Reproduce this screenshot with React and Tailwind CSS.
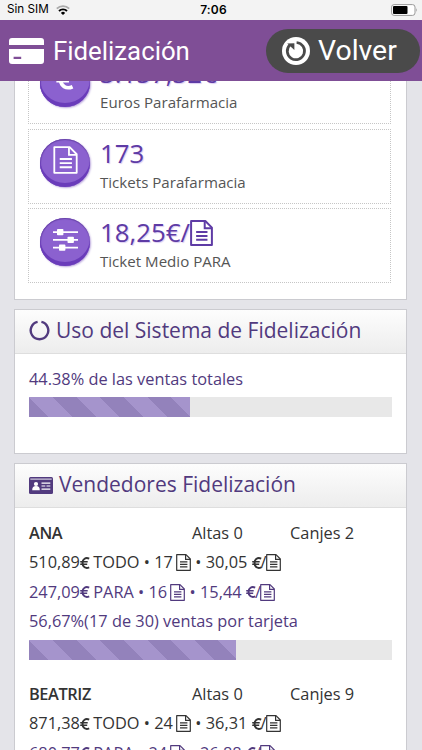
import React from "react";

const vendedores = [
    {
        nombre: "ANA",
        altas: 0,
        canjes: 2,
        todo: { euros: "510,89", tickets: 17, medio: "30,05" },
        para: { euros: "247,09", tickets: 16, medio: "15,44" },
        uso: "56,67%(17 de 30) ventas por tarjeta",
        porcentaje: 56.9
    },
    {
        nombre: "BEATRIZ",
        altas: 0,
        canjes: 9,
        todo: { euros: "871,38", tickets: 24, medio: "36,31" },
        para: { euros: "680,77", tickets: 24, medio: "26,88" },
        uso: "64,86%(24 de 37) ventas por tarjeta",
        porcentaje: 64.86
    }
];

// Icons
function TicketIcon({ className, stroke = 1.2 }) {
    return (
        <svg viewBox="0 0 15 17" className={className} fill="none" stroke="currentColor" strokeWidth={stroke}>
            <path d="M.7 .7H10L14.3 5V16.3H.7Z" strokeLinejoin="round" />
            <path d="M9.6 .9V5.4H14.2M4 7.9H11.4M4 10.4H11.4M4 12.9H11.4" />
        </svg>
    );
}

function EuroIcon({ className }) {
    return (
        <svg viewBox="0 0 10 12" className={className} fill="none" stroke="currentColor">
            <path d="M9.2 1.7C5.7 .1 2.5 2 2.5 6S5.7 11.9 9.2 10.3" strokeWidth="2" />
            <path d="M.2 4.8H7.7M.2 7.2H7.2" strokeWidth="1.4" />
        </svg>
    );
}

function SlidersIcon({ className }) {
    return (
        <svg viewBox="0 0 25 22" className={className} fill="currentColor">
            <path d="M0 2.2H25V4H0ZM0 10H25V11.8H0ZM0 17.8H25V19.6H0Z" />
            <rect x="4" y="0" width="6.4" height="6.2" rx=".8" />
            <rect x="14.5" y="7.8" width="6.4" height="6.2" rx=".8" />
            <rect x="6" y="15.6" width="6.4" height="6.2" rx=".8" />
        </svg>
    );
}

function CardIcon() {
    return (
        <svg viewBox="0 0 35 26" className="h-[26px] w-[35px] shrink-0" fill="#fff">
            <path d="M3 0H32A3 3 0 0 1 35 3V7H0V3A3 3 0 0 1 3 0Z" />
            <path fillRule="evenodd" d="M0 11H35V23A3 3 0 0 1 32 26H3A3 3 0 0 1 0 23ZM4.6 18.8V20.9H12.2V18.8Z" />
        </svg>
    );
}

function BackIcon() {
    return (
        <svg viewBox="0 0 28 28" className="size-7 shrink-0">
            <circle cx="14" cy="14" r="14" fill="#fff" />
            <path d="M14.6 5.5A8.6 8.6 0 1 1 8 7.8" fill="none" stroke="#4a4a4a" strokeWidth="2.7" />
            <path d="M5.2 6.6L12.4 6.2V13Z" fill="#4a4a4a" />
        </svg>
    );
}

function IdCardIcon() {
    return (
        <svg viewBox="0 0 24 17" className="mb-px h-[17px] w-6 shrink-0">
            <rect width="24" height="17" rx="1.5" fill="#513a7e" />
            <path d="M1.3 2.1H22.7" stroke="#fff" strokeWidth=".9" />
            <circle cx="7" cy="7" r="2.1" fill="#fff" />
            <path d="M3.2 13.3C3.2 10.3 4.4 9 7 9S10.8 10.3 10.8 13.3Z" fill="#fff" />
            <path d="M12.5 6.1H21.3M12.5 9H16.3M17.5 9H21.3M12.5 12.1H21.3" stroke="#fff" strokeWidth="1.2" />
        </svg>
    );
}

function Stat({ icon, label, children }) {
    return (
        <div className="flex h-[75px] items-start border border-dotted border-[#c6c6c6] pl-[11px]">
            <div className="mt-[9px] flex h-12 w-[50px] shrink-0 items-center justify-center rounded-[50%] bg-[#8b61cf] pb-[5px] text-white shadow-[inset_0_-4px_0_#6a3cba,inset_0_1px_1px_#6844a8,inset_1px_0_1px_#7148b5,1px_1px_2px_#b9a5dc]">
                {icon}
            </div>
            <div className="ml-2.5">
                <div className="mt-1.5 flex h-[35px] items-center text-[25.8px] whitespace-nowrap text-[#5e3ba5] [text-shadow:1px_1px_1px_#dccdf2]">
                    {children}
                </div>
                <div className="mt-px h-5 text-[15.1px] leading-5 whitespace-nowrap text-[#555]">{label}</div>
            </div>
        </div>
    );
}

function PanelTitle({ icon, children }) {
    return (
        <div className="flex h-11 items-center border-b border-[#dedede] bg-linear-to-b from-[#fdfdfd] to-[#ededed] pl-3.5 text-[21px] whitespace-nowrap text-[#513a7e]">
            {icon}
            <h2 className="mb-0.5 ml-1.5">{children}</h2>
        </div>
    );
}

function Progress({ value }) {
    return (
        <div className="h-5 bg-[#e8e8e8]">
            <div
                className="h-5 bg-[repeating-linear-gradient(45deg,#9382bb_0_14.1px,#a594cc_14.1px_30.8px,#9382bb_30.8px_33.4px)]"
                style={{ width: `${value}%` }}
            />
        </div>
    );
}

function Ventas({ tipo, datos, className }) {
    return (
        <div className={`flex h-[29.5px] items-center whitespace-pre ${className}`}>
            <span>{datos.euros}</span>
            <EuroIcon className="h-3 w-2.5" />
            <span className="-ml-px">{` ${tipo} • ${datos.tickets} `}</span>
            <TicketIcon className="-mx-px h-[17px] w-[15px]" />
            <span className="ml-px">{` • ${datos.medio} `}</span>
            <EuroIcon className="h-3 w-2.5" />
            <span className="-ml-px">/</span>
            <TicketIcon className="-ml-px h-[17px] w-[15px]" />
        </div>
    );
}

function Vendedor({ v }) {
    return (
        <div className="h-[161px]">
            <div className="flex h-[29.5px] items-center text-[#333]">
                <b className="w-[163px] font-semibold tracking-[-0.4px]">{v.nombre}</b>
                <span className="w-[98px]">Altas {v.altas}</span>
                <span>Canjes {v.canjes}</span>
            </div>
            <Ventas tipo="TODO" datos={v.todo} className="text-[#333]" />
            <Ventas tipo="PARA" datos={v.para} className="text-[#513a7e]" />
            <div className="mb-[3.5px] flex h-[29.5px] items-center whitespace-nowrap text-[#513a7e]">{v.uso}</div>
            <Progress value={v.porcentaje} />
        </div>
    );
}

function App() {
    return (
        <div className="flex h-[750px] w-[422px] flex-col overflow-hidden bg-[#e4e4e9] font-['Open_Sans',sans-serif]">

            {/* Status bar */}
            <div className="grid h-5 shrink-0 grid-cols-3 items-center bg-[#f3f3f3] pr-1 pl-[7px] font-['Inter',sans-serif] text-xs text-black">
                <div className="flex items-center gap-[7px]">
                    <span className="text-[11.7px]">Sin SIM</span>
                    <svg viewBox="0 0 14 10" className="h-2.5 w-3.5" fill="none" strokeWidth="1.9">
                        <path d="M.8 3.6A9 9 0 0 1 13.2 3.6" stroke="#aaa" />
                        <path d="M3 6A5.7 5.7 0 0 1 11 6" stroke="#000" />
                        <path d="M7 10L4.9 7.9A3 3 0 0 1 9.1 7.9Z" fill="#000" />
                    </svg>
                </div>
                <span className="pl-0.5 text-center font-semibold tracking-[0.2px]">7:06</span>
                <svg viewBox="0 0 27 12" className="h-3 w-[27px] justify-self-end">
                    <rect x=".6" y=".6" width="23.4" height="10.8" rx="2.5" fill="#fff" stroke="#999" />
                    <rect x="2" y="2" width="14.5" height="8" rx="1" fill="#000" />
                    <path d="M25 4Q26.6 6 25 8Z" fill="#999" />
                </svg>
            </div>

            {/* Header */}
            <header className="flex h-[61px] shrink-0 items-center justify-between bg-[#7f4e96] pr-0.5 pl-[9px] font-['Roboto',sans-serif] text-white">
                <div className="flex items-center gap-[9px]">
                    <CardIcon />
                    <h1 className="mt-0.5 text-[25.8px]">Fidelización</h1>
                </div>
                <button className="flex h-11 w-[154px] items-center gap-2 rounded-full bg-[#4a4a4a] pl-4 text-[28.4px]">
                    <BackIcon />
                    <span className="mt-0.5">Volver</span>
                </button>
            </header>

            {/* Main content */}
            <main className="min-h-0 flex-1 overflow-hidden pr-[15px] pl-3.5">
                <section className="-mt-[33px] flex h-[252px] flex-col gap-[4.5px] border border-[#cbcbd0] bg-white pr-[15px] pl-[13px]">
                    <Stat icon={<EuroIcon className="mb-1 h-[22px] w-[18px]" />} label="Euros Parafarmacia">
                        3.157,32€
                    </Stat>
                    <Stat icon={<TicketIcon className="h-7 w-[25px]" stroke={1.1} />} label="Tickets Parafarmacia">
                        173
                    </Stat>
                    <Stat icon={<SlidersIcon className="h-[22px] w-[25px]" />} label="Ticket Medio PARA">
                        18,25€/
                        <TicketIcon className="h-[26px] w-[23px]" stroke={1.3} />
                    </Stat>
                </section>

                <section className="mt-[9px] h-[145px] border border-[#cbcbd0] bg-white">
                    <PanelTitle
                        icon={
                            <svg viewBox="0 0 21 21" className="mb-0.5 size-[21px]">
                                <path d="M12.4 1.9A8.8 8.8 0 1 1 8.6 1.9" fill="none" stroke="#513a7e" strokeWidth="2.4" />
                            </svg>
                        }
                    >
                        Uso del Sistema de Fidelización
                    </PanelTitle>
                    <div className="pt-[10.5px] pr-3.5 pl-3.5 text-[16.35px] text-[#513a7e]">
                        <p className="mb-[3px] flex h-[29.5px] items-center">44.38% de las ventas totales</p>
                        <Progress value={44.38} />
                    </div>
                </section>

                <section className="mt-[9px] h-[400px] border border-[#cbcbd0] bg-white">
                    <PanelTitle icon={<IdCardIcon />}>Vendedores Fidelización</PanelTitle>
                    <div className="pt-[10.5px] pr-3.5 pl-3.5 text-[16.35px]">
                        {vendedores.map((v) => (
                            <Vendedor key={v.nombre} v={v} />
                        ))}
                    </div>
                </section>
            </main>
        </div>
    );
}

export default App;
